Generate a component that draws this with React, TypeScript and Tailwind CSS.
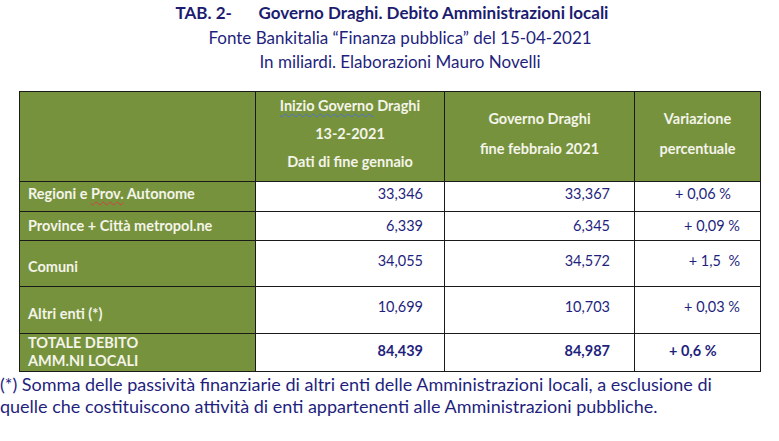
import React from "react";

const font = { fontFamily: "Lato, 'Open Sans', sans-serif" };

const rows = [
    { label: "Regioni e Prov. Autonome", a: "33,346", b: "33,367", v: "+ 0,06 %", h: "h-[30px]", pad: "pr-[29px]" },
    { label: "Province + Città metropol.ne", a: "6,339", b: "6,345", v: "+ 0,09 %", h: "h-[29px]", pad: "pr-[20px]" },
    { label: "Comuni", a: "34,055", b: "34,572", v: "+ 1,5  %", h: "h-[46px]", pad: "pr-[20px]" },
    { label: "Altri enti (*)", a: "10,699", b: "10,703", v: "+ 0,03 %", h: "h-[47px]", pad: "pr-[20px]" },
];

export default function App() {
    return (
        <div className="w-[779px] h-[441px] bg-white overflow-hidden text-[#1f1f7d]" style={font}>
            {/* Title block */}
            <div className="flex flex-col items-center pl-[21px] pt-[1px]">
                <div className="text-[17px] font-bold leading-[24px] flex text-[#1c1c70] mr-[16px]">
                    <span className="w-[83px]">TAB. 2-</span>
                    <span>Governo Draghi. Debito Amministrazioni locali</span>
                </div>
                <div className="text-[17px] leading-[24px] mt-[1px]">Fonte Bankitalia “Finanza pubblica” del 15-04-2021</div>
                <div className="text-[17px] leading-[24px]">In miliardi. Elaborazioni Mauro Novelli</div>
            </div>

            {/* Table */}
            <table className="ml-[19px] mt-[17px] border-collapse table-fixed w-[741px] text-[14.5px]">
                <colgroup>
                    <col className="w-[236px]" />
                    <col className="w-[189px]" />
                    <col className="w-[190px]" />
                    <col className="w-[126px]" />
                </colgroup>
                <thead>
                    <tr className="h-[90px] bg-[#76923c] text-[#f4f4ea] font-bold">
                        <th className="border border-[#1a1a1a]"></th>
                        <th className="border border-[#1a1a1a] align-top pt-0 font-bold leading-[28px]">
                            <div className="underline decoration-wavy decoration-[#4d6fd0] decoration-1 underline-offset-2 inline">Inizio Governo</div> Draghi
                            <div>13-2-2021</div>
                            <div>Dati di fine gennaio</div>
                        </th>
                        <th className="border border-[#1a1a1a] font-bold leading-[30px] pb-[6px]">
                            <div>Governo Draghi</div>
                            <div>fine febbraio 2021</div>
                        </th>
                        <th className="border border-[#1a1a1a] font-bold leading-[30px] pb-[6px]">
                            <div>Variazione</div>
                            <div>percentuale</div>
                        </th>
                    </tr>
                </thead>
                <tbody>
                    {rows.map((r, i) => (
                        <tr key={i} className={r.h}>
                            <td className={`border border-[#1a1a1a] bg-[#76923c] text-[#f4f4ea] font-bold pl-[8px] ${i >= 2 ? "align-bottom pb-[8px]" : i === 0 ? "align-top pt-[1px]" : "align-middle"}`}>
                                {i === 0 ? (
                                    <>Regioni e <span className="underline decoration-wavy decoration-[#d04040] decoration-1 underline-offset-2">Prov.</span> Autonome</>
                                ) : r.label}
                            </td>
                            <td className={`border border-[#1a1a1a] text-right pr-[21px] ${i >= 2 ? "align-top pt-[9px]" : i === 0 ? "align-top pt-[1px]" : "align-middle"}`}>{r.a}</td>
                            <td className={`border border-[#1a1a1a] text-right pr-[24px] ${i >= 2 ? "align-top pt-[9px]" : i === 0 ? "align-top pt-[1px]" : "align-middle"}`}>{r.b}</td>
                            <td className={`border border-[#1a1a1a] text-right whitespace-pre ${r.pad} ${i >= 2 ? "align-top pt-[9px]" : i === 0 ? "align-top pt-[1px]" : "align-middle"}`}>{r.v}</td>
                        </tr>
                    ))}
                    <tr className="h-[38px]">
                        <td className="border border-[#1a1a1a] bg-[#76923c] text-[#f4f4ea] font-bold pl-[8px] leading-[18px] align-top pt-0">
                            <div>TOTALE DEBITO</div>
                            <div>AMM.NI LOCALI</div>
                        </td>
                        <td className="border border-[#1a1a1a] text-right pr-[21px] font-bold align-top pt-[6px]">84,439</td>
                        <td className="border border-[#1a1a1a] text-right pr-[24px] font-bold align-top pt-[6px]">84,987</td>
                        <td className="border border-[#1a1a1a] text-left pl-[34px] font-bold align-top pt-[6px]">+ 0,6 %</td>
                    </tr>
                </tbody>
            </table>

            {/* Footnote */}
            <div className="text-[18px] leading-[22px] mt-[1px]">
                <div>(*) Somma delle passività finanziarie di altri enti delle Amministrazioni locali, a esclusione di</div>
                <div>quelle che costituiscono attività di enti appartenenti alle Amministrazioni pubbliche.</div>
            </div>
        </div>
    );
}
